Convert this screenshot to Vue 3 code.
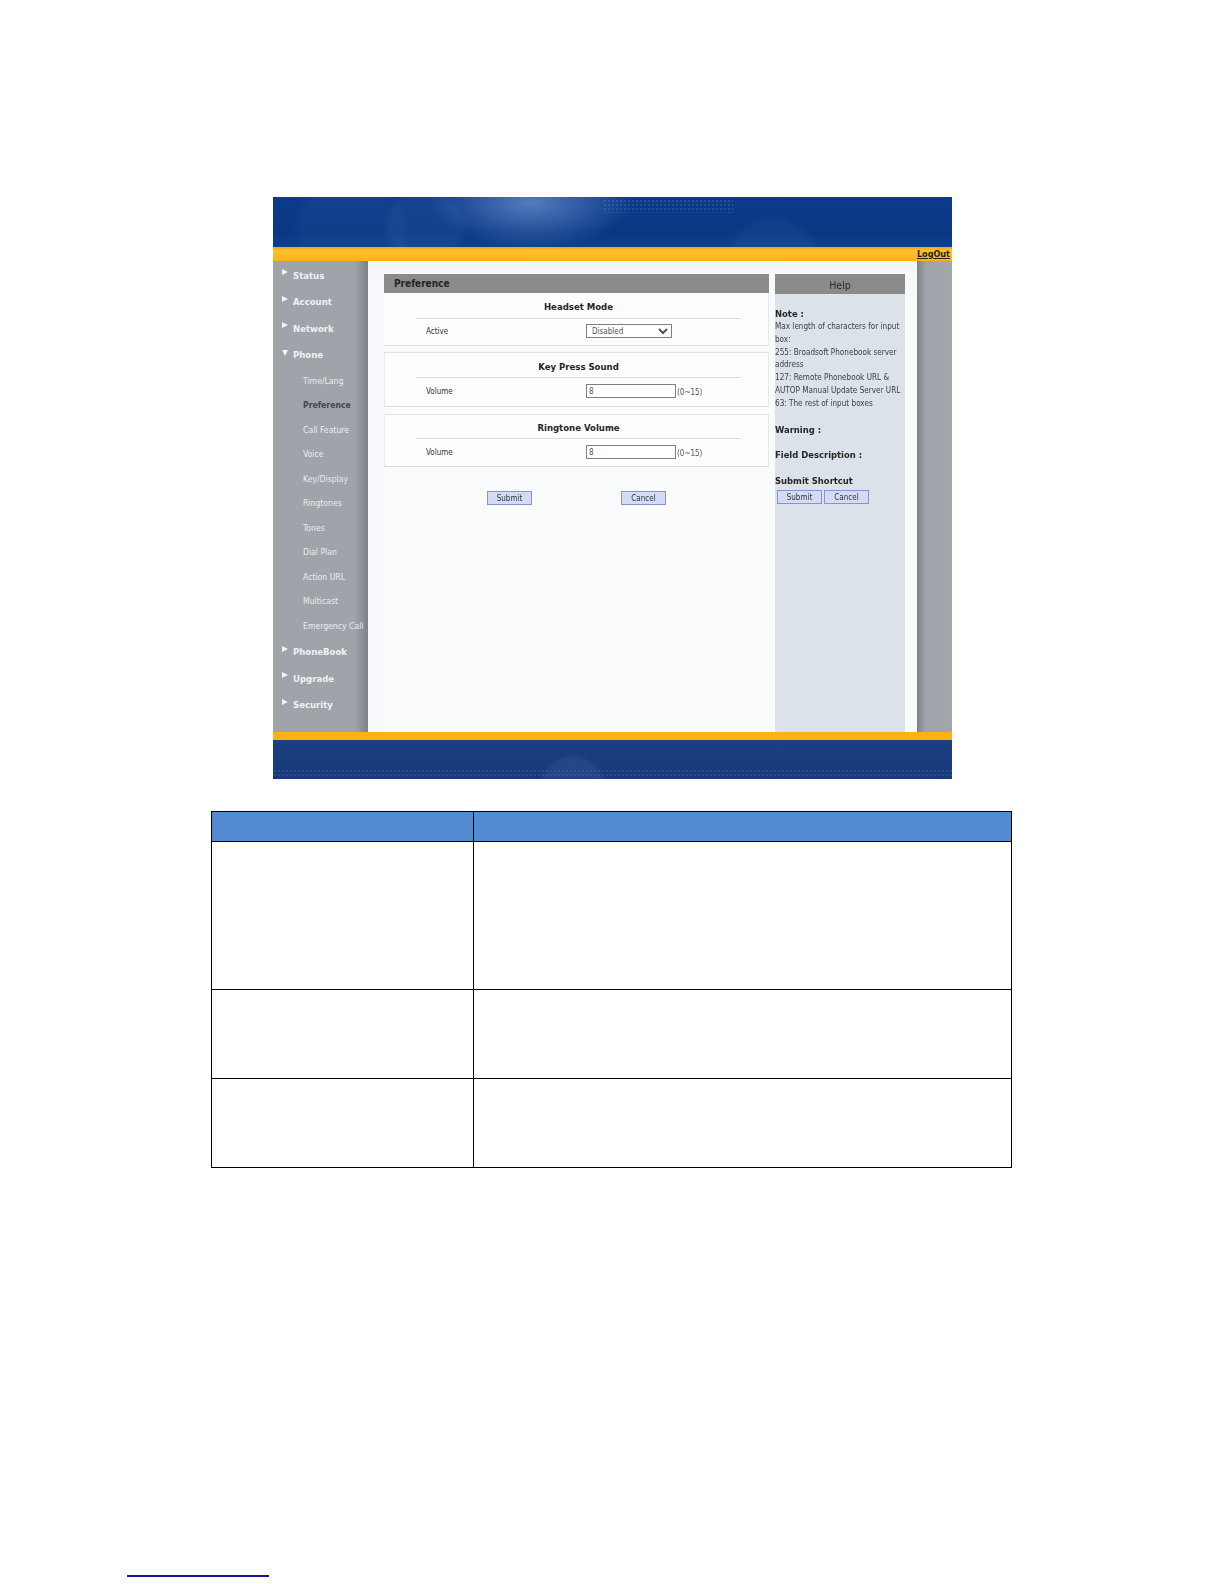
<script setup>
const topBefore = ['Status', 'Account', 'Network']
const subs = ['Time/Lang', 'Preference', 'Call Feature', 'Voice', 'Key/Display', 'Ringtones', 'Tones', 'Dial Plan', 'Action URL', 'Multicast', 'Emergency Call']
const topAfter = ['PhoneBook', 'Upgrade', 'Security']
const notes = [
  'Max length of characters for input',
  'box:',
  '255: Broadsoft Phonebook server',
  'address',
  '127: Remote Phonebook URL &',
  'AUTOP Manual Update Server URL',
  '63: The rest of input boxes'
]
const rows = ['r1', 'r2', 'r3']
</script>

<template>
  <div class="page">
    <div class="shot">
      <div class="banner"></div>
      <div class="stripe"><a class="logout">LogOut</a></div>
      <div class="mid">
        <nav class="side">
          <div v-for="t in topBefore" :key="t" class="top"><span class="tri"></span>{{ t }}</div>
          <div class="top"><span class="tri down"></span>Phone</div>
          <div class="subs">
            <div v-for="s in subs" :key="s" class="sub" :class="{ active: s === 'Preference' }">{{ s }}</div>
          </div>
          <div v-for="t in topAfter" :key="t" class="top"><span class="tri"></span>{{ t }}</div>
        </nav>
        <main class="content">
          <section class="form">
            <h2 class="bar">Preference</h2>
            <div class="panel p1">
              <h3>Headset Mode</h3>
              <div class="row">
                <label>Active</label>
                <select class="field sel"><option>Disabled</option></select>
              </div>
            </div>
            <div class="panel p2">
              <h3>Key Press Sound</h3>
              <div class="row">
                <label>Volume</label>
                <input class="field inp" value="8" />
                <span class="range">(0~15)</span>
              </div>
            </div>
            <div class="panel p3">
              <h3>Ringtone Volume</h3>
              <div class="row">
                <label>Volume</label>
                <input class="field inp" value="8" />
                <span class="range">(0~15)</span>
              </div>
            </div>
            <div class="actions">
              <button class="btn">Submit</button>
              <button class="btn">Cancel</button>
            </div>
          </section>
          <aside class="help">
            <div class="help-head">Help</div>
            <div class="help-body">
              <h4 class="h-note">Note :</h4>
              <p v-for="n in notes" :key="n">{{ n }}</p>
              <h4 class="h-warn">Warning :</h4>
              <h4 class="h-field">Field Description :</h4>
              <h4 class="h-sub">Submit Shortcut</h4>
              <div class="help-actions">
                <button class="btn">Submit</button>
                <button class="btn">Cancel</button>
              </div>
            </div>
          </aside>
        </main>
        <div class="edge"></div>
      </div>
      <div class="stripe2"></div>
      <div class="foot"></div>
    </div>

    <table class="doc">
      <thead>
        <tr class="hd"><th class="c1"></th><th></th></tr>
      </thead>
      <tbody>
        <tr v-for="r in rows" :key="r" :class="r"><td></td><td></td></tr>
      </tbody>
    </table>

    <div class="footnote"></div>
  </div>
</template>

<style>
html, body { background: #fff; }
</style>

<style scoped>
.page {
  height: 1584px;
  box-sizing: border-box;
  padding-top: 197px;
  background: #fff;
  overflow: hidden;
  font-family: "DejaVu Sans", sans-serif;
  font-stretch: condensed;
}
.shot {
  width: 679px;
  margin-left: 273px;
  filter: blur(0.3px);
}
.banner {
  position: relative;
  height: 50px;
  background:
    radial-gradient(circle at 152px 30px, rgba(120, 160, 220, .09) 0 34px, transparent 42px),
    radial-gradient(circle at 78px 36px, rgba(120, 160, 220, .05) 0 50px, transparent 60px),
    radial-gradient(circle at 500px 70px, rgba(120, 160, 220, .07) 0 44px, transparent 52px),
    radial-gradient(ellipse 100px 46px at 258px 6px, rgba(140, 178, 232, .55), transparent),
    linear-gradient(180deg, #0c3b8b 0%, #0a3784 70%, #0e3f8d 100%);
}
.banner::after {
  content: "";
  position: absolute;
  left: 330px;
  top: 2px;
  width: 130px;
  height: 14px;
  background: radial-gradient(circle, rgba(190, 210, 240, .14) 0 .7px, transparent 1px) 0 0 / 4px 4px;
}
.stripe {
  height: 14px;
  background: linear-gradient(180deg, #e6a51c 0, #ffc02c 25%, #fdb316 100%);
  display: flex;
  justify-content: flex-end;
  align-items: center;
  padding-right: 2px;
}
.logout {
  font-size: 9px;
  font-weight: 700;
  color: #2a2410;
  text-decoration: underline;
}
.mid {
  height: 471px;
  display: flex;
}
.side {
  width: 95px;
  flex: none;
  box-sizing: border-box;
  padding-top: 1px;
  background: linear-gradient(90deg, #a0a3a9 0, #a0a3a9 86%, #7d8086 100%);
  overflow: hidden;
}
.top {
  height: 26.5px;
  display: flex;
  align-items: center;
  padding-left: 20px;
  position: relative;
  font-size: 9.5px;
  font-weight: 700;
  color: #f1f1f3;
}
.tri {
  position: absolute;
  left: 9px;
  top: 7px;
  width: 0;
  height: 0;
  border-left: 6px solid #f4f4f4;
  border-top: 3px solid transparent;
  border-bottom: 3px solid transparent;
}
.tri.down {
  left: 9px;
  top: 8px;
  border-left: 3px solid transparent;
  border-right: 3px solid transparent;
  border-top: 6px solid #f4f4f4;
  border-bottom: 0;
}
.subs {
  padding-top: .5px;
  padding-bottom: .5px;
}
.sub {
  height: 24.5px;
  display: flex;
  align-items: center;
  padding-left: 30px;
  font-size: 8.6px;
  color: #eceded;
  white-space: nowrap;
}
.sub.active {
  font-weight: 700;
  color: #43464c;
}
.content {
  width: 549px;
  flex: none;
  box-sizing: border-box;
  padding: 13px 12px 0 16px;
  display: flex;
  gap: 6px;
  background: linear-gradient(180deg, #f2f2f2 0, #f7f8f9 12px, #f9fafc 40px);
}
.form {
  width: 385px;
  flex: none;
  background: #fafbfd;
}
.bar {
  margin: 0;
  height: 19px;
  line-height: 20px;
  padding-left: 10px;
  background: #8b8b8b;
  font-size: 10px;
  font-weight: 700;
  color: #242424;
}
.panel {
  box-sizing: border-box;
  background: #fdfdfe;
  border-right: 1px solid #e6e8ea;
  border-bottom: 1px solid #dcdee1;
}
.p1 { height: 53px; }
.p2, .p3 {
  border-top: 1px solid #dfe1e4;
  border-left: 1px solid #e9ebed;
}
.p2 { height: 55px; margin-top: 6px; }
.p3 { height: 53px; margin-top: 7px; }
.panel h3 {
  margin: 0 27px 0 32px;
  height: 26px;
  line-height: 27px;
  text-align: center;
  font-size: 9.5px;
  font-weight: 700;
  color: #262626;
  border-bottom: 1px solid #d9dbde;
  box-sizing: border-box;
}
.p2 h3 { height: 25px; line-height: 27px; }
.p3 h3 { height: 24px; line-height: 26px; }
.p2 h3, .p3 h3 { margin-left: 31px; }
.row {
  display: flex;
  align-items: center;
  height: 24px;
  padding-left: 42px;
}
.p2 .row, .p3 .row { padding-left: 41px; height: 26px; }
.row label {
  width: 160px;
  flex: none;
  font-size: 8px;
  color: #333;
}
.field {
  box-sizing: border-box;
  font-family: "DejaVu Sans", sans-serif;
  font-stretch: condensed;
  font-size: 8px;
  color: #555;
  margin: 0;
  border: 1px solid #808080;
  background: #fff;
  border-radius: 0;
  height: 14px;
}
.sel { width: 86px; padding: 0 0 0 1px; }
.inp { width: 90px; padding: 0 2px; outline: none; }
.range {
  font-size: 8px;
  color: #555;
  margin: 3px 0 0 1px;
}
.actions {
  display: flex;
  gap: 89px;
  padding: 24px 0 0 103px;
}
.btn {
  box-sizing: border-box;
  width: 45px;
  height: 14px;
  padding: 0;
  background: #d4dbf5;
  border: 1px solid #8b94c9;
  border-radius: 0;
  font-family: "DejaVu Sans", sans-serif;
  font-stretch: condensed;
  font-size: 8px;
  color: #333;
}
.help {
  width: 130px;
  flex: none;
  background: #dbe2e9;
}
.help-head {
  height: 20px;
  line-height: 23px;
  background: #8b8b8b;
  text-align: center;
  font-size: 10.5px;
  color: #2a2a2a;
}
.help-body {
  color: #3d3d3d;
  white-space: nowrap;
}
.help-body h4 {
  margin: 0;
  font-size: 9.4px;
  font-weight: 700;
  color: #262626;
  line-height: 13px;
}
.help-body p {
  margin: 0;
  font-size: 8.1px;
  line-height: 12.75px;
}
.h-note { padding-top: 13px; }
.h-warn { padding-top: 14px; }
.h-field { padding-top: 12px; }
.h-sub { padding-top: 13px; }
.help-actions {
  display: flex;
  gap: 2px;
  padding: 3px 0 0 2px;
}
.edge {
  flex: 1;
  background: linear-gradient(90deg, #7f8289 0, #a0a3aa 25%, #a3a6ad 100%);
}
.stripe2 {
  height: 8px;
  background: #fdb213;
}
.foot {
  position: relative;
  height: 39px;
  background:
    radial-gradient(circle at 300px 50px, rgba(120, 150, 200, .12) 0 30px, transparent 36px),
    linear-gradient(180deg, #1b3f82 0, #17397a 100%);
}
.foot::after {
  content: "";
  position: absolute;
  left: 0;
  right: 0;
  bottom: 2px;
  height: 8px;
  background: radial-gradient(circle, rgba(190, 210, 240, .1) 0 .7px, transparent 1px) 0 0 / 4px 4px;
}
.doc {
  margin: 32px 0 0 211px;
  width: 801px;
  border-collapse: collapse;
  table-layout: fixed;
}
.doc th, .doc td {
  border: 1.5px solid #000;
  padding: 0;
}
.c1 { width: 261px; }
.hd { height: 30px; background: #528bd2; }
.r1 { height: 148px; }
.r2 { height: 89px; }
.r3 { height: 89px; }
.footnote {
  width: 142px;
  height: 1.5px;
  margin: 407px 0 0 127px;
  background: #1a1a8c;
}
</style>
